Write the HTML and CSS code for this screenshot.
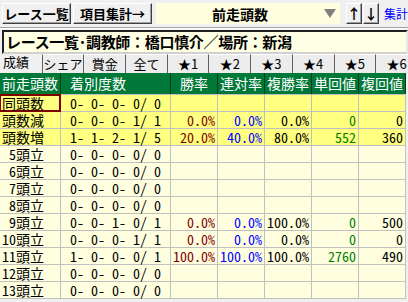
FILE: index.html
```html
<!DOCTYPE html>
<html lang="ja">
<head>
    <meta charset="UTF-8">
    <meta name="viewport" content="width=device-width, initial-scale=1.0">
    <title>レース一覧 項目集計</title>
    <link rel="stylesheet" href="styles.css">
</head>
<body>
    <div class="toolbar">
        <button class="btn btn-list">レース一覧</button>
        <button class="btn btn-item">項目集計→</button>
        <div class="select">
            <span class="select-text">前走頭数</span>
            <svg class="select-arrow" width="12" height="9" viewBox="0 0 12 9"><polygon points="0,0 12,0 6,9" fill="#808080"/></svg>
        </div>
        <button class="btn btn-arrow">↑</button>
        <button class="btn btn-arrow">↓</button>
        <a class="link" href="#">集計</a>
    </div>
    <div class="rule"></div>
    <div class="title">レース一覧･調教師：橋口慎介／場所：新潟</div>

    <div class="tabs">
        <div class="tab active">成績</div>
        <div class="tab">シェア</div>
        <div class="tab">賞金</div>
        <div class="tab">全て</div>
        <div class="tab">★1</div>
        <div class="tab">★2</div>
        <div class="tab">★3</div>
        <div class="tab">★4</div>
        <div class="tab">★5</div>
        <div class="tab">★6</div>
    </div>

    <div class="stats">
        <div class="row head">
            <div class="cell">前走頭数</div>
            <div class="cell count">着別度数</div>
            <div class="cell mid">勝率</div>
            <div class="cell mid">連対率</div>
            <div class="cell mid">複勝率</div>
            <div class="cell mid">単回値</div>
            <div class="cell mid">複回値</div>
        </div>
        <div class="row hl">
            <div class="cell label selected">同頭数</div>
            <div class="cell count">0- 0- 0- 0/ 0</div>
            <div class="cell num win"></div>
            <div class="cell num ren"></div>
            <div class="cell num fuku"></div>
            <div class="cell num tan"></div>
            <div class="cell num fukuret"></div>
        </div>
        <div class="row hl">
            <div class="cell label">頭数減</div>
            <div class="cell count">0- 0- 0- 1/ 1</div>
            <div class="cell num win">0.0%</div>
            <div class="cell num ren">0.0%</div>
            <div class="cell num fuku">0.0%</div>
            <div class="cell num tan">0</div>
            <div class="cell num fukuret">0</div>
        </div>
        <div class="row hl">
            <div class="cell label">頭数増</div>
            <div class="cell count">1- 1- 2- 1/ 5</div>
            <div class="cell num win">20.0%</div>
            <div class="cell num ren">40.0%</div>
            <div class="cell num fuku">80.0%</div>
            <div class="cell num tan">552</div>
            <div class="cell num fukuret">360</div>
        </div>
        <div class="row">
            <div class="cell label"> 5頭立</div>
            <div class="cell count">0- 0- 0- 0/ 0</div>
            <div class="cell"></div><div class="cell"></div><div class="cell"></div><div class="cell"></div><div class="cell"></div>
        </div>
        <div class="row">
            <div class="cell label"> 6頭立</div>
            <div class="cell count">0- 0- 0- 0/ 0</div>
            <div class="cell"></div><div class="cell"></div><div class="cell"></div><div class="cell"></div><div class="cell"></div>
        </div>
        <div class="row">
            <div class="cell label"> 7頭立</div>
            <div class="cell count">0- 0- 0- 0/ 0</div>
            <div class="cell"></div><div class="cell"></div><div class="cell"></div><div class="cell"></div><div class="cell"></div>
        </div>
        <div class="row">
            <div class="cell label"> 8頭立</div>
            <div class="cell count">0- 0- 0- 0/ 0</div>
            <div class="cell"></div><div class="cell"></div><div class="cell"></div><div class="cell"></div><div class="cell"></div>
        </div>
        <div class="row">
            <div class="cell label"> 9頭立</div>
            <div class="cell count">0- 0- 1- 0/ 1</div>
            <div class="cell num win">0.0%</div>
            <div class="cell num ren">0.0%</div>
            <div class="cell num fuku">100.0%</div>
            <div class="cell num tan">0</div>
            <div class="cell num fukuret">500</div>
        </div>
        <div class="row">
            <div class="cell label">10頭立</div>
            <div class="cell count">0- 0- 0- 1/ 1</div>
            <div class="cell num win">0.0%</div>
            <div class="cell num ren">0.0%</div>
            <div class="cell num fuku">0.0%</div>
            <div class="cell num tan">0</div>
            <div class="cell num fukuret">0</div>
        </div>
        <div class="row">
            <div class="cell label">11頭立</div>
            <div class="cell count">1- 0- 0- 0/ 1</div>
            <div class="cell num win">100.0%</div>
            <div class="cell num ren">100.0%</div>
            <div class="cell num fuku">100.0%</div>
            <div class="cell num tan">2760</div>
            <div class="cell num fukuret">490</div>
        </div>
        <div class="row">
            <div class="cell label">12頭立</div>
            <div class="cell count">0- 0- 0- 0/ 0</div>
            <div class="cell"></div><div class="cell"></div><div class="cell"></div><div class="cell"></div><div class="cell"></div>
        </div>
        <div class="row">
            <div class="cell label">13頭立</div>
            <div class="cell count">0- 0- 0- 0/ 0</div>
            <div class="cell"></div><div class="cell"></div><div class="cell"></div><div class="cell"></div><div class="cell"></div>
        </div>
    </div>
</body>
</html>
```
FILE: styles.css
```css
body {
    margin: 0;
    background-color: #f0f0f0;
    font-family: "Noto Sans CJK JP", "Noto Sans", sans-serif;
    overflow: hidden;
}
.toolbar {
    display: flex;
    align-items: center;
    height: 21px;
    padding: 3px 0 0 2px;
    white-space: nowrap;
}
.btn {
    flex: 0 0 auto;
    height: 21px;
    padding: 0;
    font-family: inherit;
    font-size: 13px;
    font-weight: bold;
    line-height: 17px;
    color: #000;
    background-color: #f0f0f0;
    border: 1px solid;
    border-color: #ffffff #404040 #404040 #ffffff;
    box-shadow: inset -1px -1px 0 #a0a0a0;
}
.btn-list {
    width: 69px;
}
.btn-item {
    width: 79px;
    margin-left: 2px;
}
.select {
    flex: 0 0 184px;
    display: flex;
    align-items: center;
    height: 21px;
    margin-left: 4px;
    margin-right: 6px;
    background-color: #ffffe0;
}
.select-text {
    flex: 1;
    padding-left: 10px;
    text-align: center;
    font-size: 14px;
    font-weight: bold;
    line-height: 18px;
}
.select-arrow {
    margin: 0 4px 0 10px;
}
.btn-arrow {
    width: 16px;
    font-size: 14px;
    margin-right: 1px;
}
.link {
    flex: 0 0 auto;
    margin-left: 4px;
    font-size: 12px;
    color: #0000ff;
    text-decoration: none;
    line-height: 16px;
}
.rule {
    height: 1px;
    margin-top: 3px;
    background-color: #a0a0a0;
    border-bottom: 1px solid #ffffff;
}
.title {
    height: 20px;
    margin: 1px 0 0 2px;
    padding-left: 2px;
    font-size: 15px;
    font-weight: bold;
    line-height: 20px;
    letter-spacing: -0.3px;
    white-space: nowrap;
    background-color: #ffffe4;
    border: 2px solid;
    border-color: #202020 #e8e8e8 #d0d0d0 #202020;
}
.tabs {
    display: flex;
    height: 19px;
    overflow: hidden;
}
.tab {
    flex: 0 0 41.7px;
    box-sizing: border-box;
    font-size: 13px;
    line-height: 18px;
    text-align: center;
    white-space: nowrap;
    border-left: 1px solid #606060;
    border-top: 1px solid #ffffff;
    background-color: #ececec;
}
.tab.active {
    border-left: none;
    border-top: none;
    background-color: #f0f0f0;
    line-height: 16px;
    text-align: left;
    padding-left: 3px;
}
.stats {
    display: flex;
    flex-direction: column;
    gap: 1px;
    width: 406px;
    background-color: #c0c0c0;
    border-bottom: 1px solid #c0c0c0;
    font-feature-settings: "hwid";
}
.row {
    display: grid;
    grid-template-columns: 60px 109px repeat(5, 46px);
    column-gap: 1px;
    height: 16px;
    padding-right: 1px;
    font-size: 14px;
    line-height: 16px;
    white-space: pre;
}
.row.head {
    height: 21px;
    line-height: 21px;
    color: #ffffff;
    background-color: #103820;
}
.row.head .cell {
    background-color: #007838;
}
.cell {
    background-color: #ffffe0;
}
.row.hl .cell {
    background-color: #ffff80;
}
.label {
    padding-left: 2px;
}
.head .cell:first-child {
    padding-left: 2px;
}
.count {
    padding-left: 9px;
}
.mid {
    text-align: center;
}
.num {
    text-align: right;
    padding-right: 2px;
}
.win {
    color: #800000;
}
.ren {
    color: #0000ff;
}
.tan {
    color: #008000;
}
.selected {
    box-shadow: inset 0 0 0 1px #800000;
    outline: 1px solid #800000;
}
```
